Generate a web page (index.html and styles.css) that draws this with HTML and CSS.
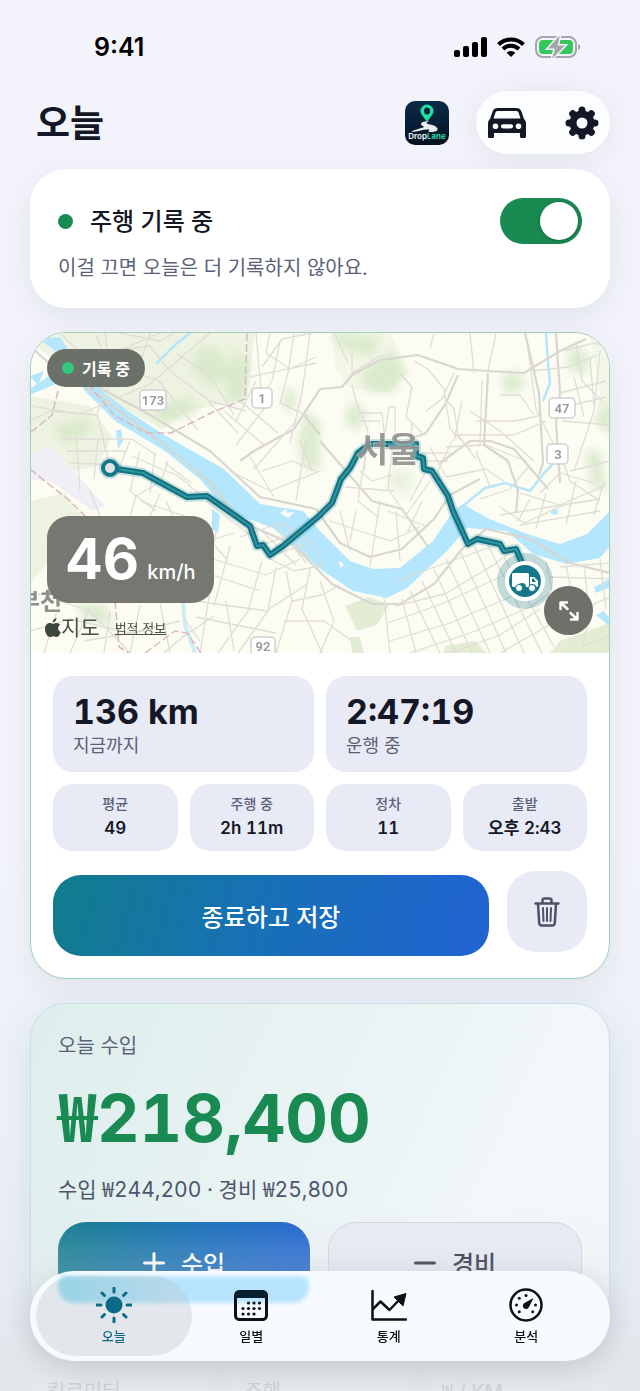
FILE: index.html
```html
<!DOCTYPE html>
<html lang="ko">
  <head>
    <meta charset="UTF-8" />
    <meta name="viewport" content="width=device-width, initial-scale=1.0" />
    <title>DropLane</title>
    <link rel="stylesheet" href="styles.css">
  </head>
  <body>
    <div class="screen">
      <!-- Status bar -->
      <div class="status-bar">
        <span class="clock">9:41</span>
        <div class="status-icons">
          <svg width="33" height="20" viewBox="0 0 33 20">
            <rect x="0" y="13" width="6" height="7" rx="2" />
            <rect x="9" y="9" width="6" height="11" rx="2" />
            <rect x="18" y="5" width="6" height="15" rx="2" />
            <rect x="27" y="0" width="6" height="20" rx="2" />
          </svg>
          <svg width="28" height="20" viewBox="0 0 28 20">
            <path d="M1.500 7.500a18 18 0 0 1 25 0M6 12a11.500 11.500 0 0 1 16 0" fill="none" stroke="#000" stroke-width="4" />
            <path d="M14 20l-4.300-4.300a6.200 6.200 0 0 1 8.600 0z" />
          </svg>
          <svg width="46" height="22" viewBox="0 0 46 22">
            <rect x="1" y="1" width="40" height="20" rx="7" fill="none" stroke="#a5a6ac" stroke-width="2" />
            <rect x="4" y="4" width="34" height="14" rx="4" fill="#34c759" />
            <path d="M43 8c3 1 3 5 0 6z" fill="#a5a6ac" />
            <path class="bolt" d="M25-1L13 12.500h7L17 23 30 9.500h-7.500z" />
          </svg>
        </div>
      </div>

      <!-- Header -->
      <header class="header">
        <h1>오늘</h1>
        <svg class="app-icon" viewBox="0 0 44 44">
          <defs>
            <linearGradient id="iconBg" x1="0" y1="0" x2="0" y2="1">
              <stop offset="0" stop-color="#0b2c49" />
              <stop offset="1" stop-color="#04101f" />
            </linearGradient>
          </defs>
          <rect width="44" height="44" rx="10" fill="url(#iconBg)" />
          <path d="M22 21c-3-5-6.500-7.500-6.500-11a6.500 6.500 0 0 1 13 0c0 3.500-3.500 6-6.500 11z" fill="#1fe0a0" />
          <ellipse cx="22" cy="10" rx="3" ry="3.500" fill="#06233a" />
          <path d="M6 30.500c4-2 9-3 12-4 3-1-3-2-2-4 1-1.500 5-2.500 8-2-4 1-3 2 1 3 6 1 9 4 7 6-2 1.500-6 2-9 1 2-1 2-2-1-2-5 0-9 3-16 2z" fill="#e9edf2" />
          <text class="icon-word" x="22" y="38" text-anchor="middle">Drop<tspan fill="#2be3b4">Lane</tspan></text>
        </svg>
        <div class="header-actions">
          <button type="button" aria-label="차량">
            <svg width="38" height="32" viewBox="0 0 38 32">
              <path fill-rule="evenodd" d="M10 1h18c3 0 4.500 1 5.400 3.500L36 12c1.500 1.400 2 3 2 5v12.500c0 1-.7 1.500-1.500 1.500h-3c-1 0-1.500-.6-1.500-1.500V26H6v3.500c0 1-.6 1.500-1.500 1.500h-3C.6 31 0 30.500 0 29.500V17c0-2 .5-3.600 2-5l2.600-7.500C5.500 2 7 1 10 1zM10 4c-1.500 0-2.200.5-2.700 2L5.500 11.500h27L30.700 6c-.5-1.500-1.200-2-2.700-2zM7.500 16.500a2.800 2.800 0 1 0 0 5.600 2.800 2.800 0 0 0 0-5.600zm23 0a2.800 2.800 0 1 0 0 5.600 2.800 2.800 0 0 0 0-5.600zM15 17.200a2 2 0 0 0 0 4.200h8a2 2 0 0 0 0-4.200z" />
            </svg>
          </button>
          <button type="button" aria-label="설정">
            <svg width="34" height="34" viewBox="-17 -17 34 34">
              <circle r="9" fill="none" stroke="#141826" stroke-width="7" />
              <g stroke="#141826" stroke-width="7" stroke-linecap="round">
                <path d="M0-11v-2M0 11v2M-11 0h-2M11 0h2M-8-8l-1.300-1.300M8-8l1.300-1.300M-8 8l-1.300 1.300M8 8l1.300 1.300" />
              </g>
            </svg>
          </button>
        </div>
      </header>

      <main class="content">
        <!-- Recording switch -->
        <section class="card record-card">
          <div class="record-row">
            <span class="dot"></span>
            <label for="record">주행 기록 중</label>
            <input type="checkbox" role="switch" id="record" checked />
          </div>
          <p>이걸 끄면 오늘은 더 기록하지 않아요.</p>
        </section>

        <!-- Current trip -->
        <section class="card trip-card">
          <div class="map">
            <svg class="map-art" viewBox="30 332 580 320" preserveAspectRatio="xMidYMid slice">
              <defs>
                <filter id="soft"><feGaussianBlur stdDeviation="4" /></filter>
              </defs>
              <rect x="30" y="332" width="580" height="320" fill="#fcfcf3" />

              <!-- Parks and hills -->
              <g fill="#edf3e0">
                <path d="M30 332h225l-8 66-60 12-25 18-70-38-62-50z" />
                <path d="M30 395l60 10 22 30-14 30-35 8-33-14z" />
                <path d="M30 500l35-8 22 30-57 60z" />
                <path d="M330 332h60l18 40-20 20-38-4-14-20z" opacity=".6" />
                <path d="M590 332h20v100l-16-10 6-30z" opacity=".6" />
              </g>
              <g fill="#d3e6c4" filter="url(#soft)" opacity=".75">
                <path d="M200 345l20 5 12 25-22 10-18-16z" />
                <path d="M150 405l40-8 8 14-35 12z" />
                <path d="M232 350l18 12-6 34-14 10-4-24z" />
                <path d="M286 385l10 6-2 20-12-4z" />
                <path d="M305 410l15 10v50l-18-5-4-26z" />
                <path d="M332 332l50 4-10 20-30-8z" />
                <path d="M360 372l32-24 14 22-14 22-26-2z" />
                <path d="M350 400l18 10-10 20-14-8z" />
                <path d="M500 375l20-5 6 16-20 8z" />
                <path d="M570 345l20 8-4 22-20-8z" />
                <path d="M596 420l14-25v40z" />
                <path d="M585 450l16 0 5 40-14-2z" />
                <path d="M395 465l20 8-8 22-18-10z" opacity=".6" />
                <path d="M75 600l30 4 10 22-30-8z" />
                <path d="M55 425l30-8 8 12-30 14z" />
              </g>
              <g fill="#e2edd3">
                <path d="M345 605l24-9 20 8-12 20-20 6z" />
                <path d="M350 636l10 0 4 16h-12z" />
                <path d="M445 645l30-5 12 12h-44z" />
                <path d="M560 640l50-18v30h-60z" />
              </g>
              <path d="M30 455c15-15 25-10 35 5l40 45-12 5-40-28-23-4z" fill="#efeff5" />

              <!-- River -->
              <g fill="#b4e6fd">
                <path d="M36 338l24-2 14 22 26 30 28 22 36 24 60 34 36 35 43 7 17 20 13 13 17 17 23 8 27-1 33-27 20-30 10-7 24 14 40 16 33 10 27-10 23-23v35l-10 12-33 6-34-10-26-23-40-3-20 23-40 37-20 10-34-7-33-22-47-41-46-17-27-32-35-28-50-30-30-30-22-34-26-20z" />
                <path d="M30 388l20-14 8 8-28 12zM30 375l14-5-6 14z" />
                <path d="M594 586l16-8v8l-14 6zM596 614l8-4 6 8v8zM552 508l6 1-1 5-6-1z" />
                <path d="M116 430l5-2 2 12-5 8zM212 508l8 6-2 18-6-4z" />
              </g>
              <g fill="none" stroke="#b4e6fd" stroke-width="2.500">
                <path d="M546 332l2 30 2 20-7 18M463 505l22-18 20-5 25 8 14-18 8-8M156 363l20-20 14-11" />
                <path d="M183 602l2 22 10 28" stroke-width="4" stroke="#cdebf2" />
              </g>
              <path d="M280 512l6-4 1 4 7-1-6 6zM338 560l6 3-3 4zM38 350l8 2 3 7-8-4z" fill="#fff" />

              <!-- Highways -->
              <g class="road road-wide">
                <path d="M30 345l22 20 50 32 53 40 53 42 34 42 50 22 40 40 40 20h28l34-20 28-35 24-20 44 10 40 24 40 10 40-12" />
                <path d="M70 358l32 30 48 26 60 36 50 46 56 12 24 34 30 14 32-8 32-30 16-24 30-16" />
                <path d="M320 388l22-2 10-12 28-15 38-5 40 14 30 2 36 2 36-22 26-12" />
                <path d="M240 460l14-10 40-22 26-40" />
                <path d="M458 374l-12 28-20 30-40 16M488 372l-4 72 24 16 10 30-2 22" />
                <path d="M525 332l14 60 4 70-4 12M556 332l4 60-4 30 4 60" />
                <path d="M440 462l30-22h20l24 8 34 40" />
                <path d="M320 434l-16-20M320 440l52 60 30 8 26 38" />
              </g>

              <!-- Local streets, north-west -->
              <g class="road">
                <path d="M105 332l6 50-14 30 12 50M60 332l30 30 70-30M96 334l12 30 50 15 40 50M30 405l50 8 70-30 60-51" />
                <path d="M150 332l-10 30-34 18M110 350l40-5 20 25 40 30 36 10M30 420l20-10 46 4M62 438h70l24 16" />
                <path d="M66 450h60M70 462l50 2M76 430l4 60M98 438l-4 40M130 440l-12 30" />
                <path d="M120 332l40 8 14-8M176 352l34 22 24 40M132 455l46 20 24 20M140 450l-10 40 26 20" />
                <path d="M155 452l-5 40M168 460l-8 24M165 462l26 20M208 400l30 32" />
                <path d="M224 410l40 34M240 400l38 32M256 380l-20 40M270 400l-34 44M296 420l-42 48" />
                <path d="M256 332l6 68M270 332l-4 20 24 16 26-12M280 340l-8 40-14 20M294 332l-6 40-8 30 30 14M250 376l66-14M262 366l20-28 30-6" />
                <path d="M310 332l-8 60-12 50M300 440l12 30M262 470l30-10 24 10M230 470l40 20 50-20M250 456l24 40M306 440l-10 60" />
              </g>

              <!-- Local streets, centre and north-east -->
              <g class="road">
                <path d="M352 352v20l30-18M334 332l14 30M352 384l4 16 12 30-4 40M358 412h24l4 36M360 420h20M385 432l4-26h6v30" />
                <path d="M414 360l14 8 16 20 6 40 20 20M430 348l4-16M470 332l4 40M496 332l-8 38M400 372l12 14-6 30 16 16" />
                <path d="M412 420l-1 26M426 410l16-12 12-26M444 396l10 12 4 26 18 24M482 380l-2 64M500 394h20l14 20" />
                <path d="M476 420h40l26-6M470 410l30 20 34 30M454 434h60l32-14M446 446l40-2 40 16M462 400l-8 40" />
                <path d="M528 348l8 60 20 40M532 370l36-4 30-12M560 392l46-12M574 376l10 40M590 358l4 46M600 350l-6 60-20 60" />
                <path d="M562 420l48 4M556 408l50-12M564 350l30-8 16 4M576 340l6 40 20 20M570 470l40-10M560 450l10 30 30 20" />
                <path d="M420 452h30M426 460h22M430 446l16 30M452 440l-14 30 8 24M446 476l40-8 20 14M476 450l14 36M530 464l-20 24-30 10" />
                <path d="M392 448l-4 40 14 20M360 470l12 10 20-6M366 450l-8 50 20 16M345 486l50 4M410 500l16-30M430 480l-24 34" />
                <path d="M540 492l20-20 34 10M520 492l40 12 46-20M500 506l24 16 40-18M530 498l-12 22M546 492l-10 36M576 480l-10 44M604 480l-10 34M500 514l100-16M520 524l80-14" />
              </g>

              <!-- Local streets, south -->
              <g class="road">
                <path d="M206 500l44 34 20 24M194 520l34 40M184 548l50-16M216 530l-10 60M230 545l-16 60M200 570l60 20M206 556l60 18 34-16" />
                <path d="M262 560l-14 50-30 42M276 566l-8 44-30 42M196 600l70 10 40-26M196 616l80 16M210 590l-10 62M226 600l8 50" />
                <path d="M240 536l40-14 30 16 14 26-30 6-24-12M262 530l34 34M276 524l30 38M290 526l20 34M256 546l46-16M266 556l44-14" />
                <path d="M286 570l6 30-16 52M310 568l-8 40 20 44M292 600l30-6 18-10M284 620h40l28 20M320 580l14 40-14 32" />
                <path d="M30 590l60 20 40 42M30 630l40-12 60 14 50-12M60 600l-16 52M90 606l-20 46M110 610l-6 42M140 604l-10 48M160 602l10 50M84 640l60-10" />
                <path d="M100 515l-10-25M130 515l6-20 24-14M150 515l10-22M180 530l-14-30M140 500l60 20M214 615l-30 20-20 17M200 640l-14-20" />
                <path d="M384 596l6 56M395 605l50-12 50-30 20-16M388 622l56-20 56-26M390 640l60-18 60-26 30-20M410 652l60-20 60-26 20-14M450 652l50-18 40-26M500 652l60-34 50-22" />
                <path d="M410 590l30 62M422 580l34 72M434 568l38 84M446 558l44 94M460 550l46 102M474 544l50 108M488 544l54 108M402 598l14 54M504 556l50 90M396 580l100-36" />
                <path d="M340 510l10 40M356 510l-6 30M380 500l-10 66M396 510l4 50M330 520l60 20 30-14M388 510l40 16M422 500l-14 30" />
                <path d="M560 566l50-4M550 576l60 2M546 560l6 30M566 564l6 30M584 562l4 40M600 558l6 50M592 606l-10 40 28-12" />
              </g>

              <!-- City limits -->
              <g fill="none" stroke="#d9b9bf" stroke-width="1.500" stroke-dasharray="8 3">
                <path d="M247 332l-2 66-34 14-40 20-25 0-32-18-20-24-14-18" />
                <path d="M58 390l-6 24-22 18M30 468l40 32 20 20M115 600l4 46 10 6M145 652l30-22 12 2 14 20" />
              </g>

              <!-- Road shields -->
              <g class="shield">
                <rect x="140" y="389" width="26" height="20" rx="4" /><text x="153" y="404">173</text>
                <rect x="252" y="387" width="20" height="20" rx="4" /><text x="262" y="402">1</text>
                <rect x="549" y="397" width="26" height="20" rx="4" /><text x="562" y="412">47</text>
                <rect x="547" y="443" width="21" height="20" rx="4" /><text x="558" y="458">3</text>
                <rect x="251" y="636" width="24" height="20" rx="4" /><text x="263" y="650">92</text>
              </g>

              <!-- Driven route -->
              <defs>
                <path id="route" d="M110 467l33 5 44 24 20-1 43 30 7 20 6-1 7 10 13-9 36-30 13-13 9-24 9-11 8-15 12-9h46v12l7 2 1 11 8 2 16 25 5 15 15 33 9-5 23 5 4 7 12-2 6 14" />
              </defs>
              <g fill="none" stroke-linejoin="round">
                <use href="#route" stroke="#2a8fa0" stroke-opacity=".25" stroke-width="10" />
                <use href="#route" stroke="#14707f" stroke-width="6" />
                <use href="#route" stroke="#2f94a3" stroke-width="2" />
              </g>
              <circle cx="110" cy="467" r="11" fill="#14707f" opacity=".2" />
              <circle cx="110" cy="467" r="7" fill="#e2e2e6" stroke="#14788a" stroke-width="4" />

              <text class="city" x="388" y="461">서울</text>
              <text class="town" x="40" y="609">부천</text>

              <!-- Truck -->
              <g transform="translate(525 580)">
                <circle r="28" fill="#14788a" opacity=".25" />
                <circle r="18" fill="#14788a" stroke="#fff" stroke-width="4" />
                <path d="M-13-6c0-1.500.5-2 2-2H2c1.500 0 2 .5 2 2V6h-3a4 4 0 0 0-8 0h-4c-1.500 0-2-.5-2-2zM5-4h4l4 4v4c0 1.500-.5 2-1.500 2a4 4 0 0 0-6.500-2zM7-2.500V1h4L8.500-2.500z" fill="#fff" fill-rule="evenodd" />
                <g fill="#fff" stroke="#14788a">
                  <circle cx="-6" cy="7" r="3.500" /><circle cx="7" cy="7" r="3.500" />
                </g>
              </g>
            </svg>

            <div class="map-badge"><span></span>기록 중</div>
            <div class="speed"><strong>46</strong> km/h</div>
            <div class="map-credit">
              <svg width="16" height="20" viewBox="0 0 16 20">
                <path d="M11.500 0c.2 2-1.500 4.200-3.700 4.200C7.500 2.200 9.500.2 11.500 0zM8 5.800c.8 0 2-.9 3.700-.9 1.500 0 2.800.8 3.500 1.900-3 1.800-2.500 6 .6 7.300-.7 2.200-2.200 4.900-4 4.900-1.300 0-1.800-.8-3.500-.8s-2.200.8-3.500.8C2.500 19 0 15 0 11c0-4 2.400-6 4.700-6C6.200 5 7.300 5.800 8 5.800z" />
              </svg>
              <span>지도</span>
              <a href="#legal">법적 정보</a>
            </div>
            <button type="button" class="expand" aria-label="지도 확대">
              <svg width="20" height="20" viewBox="0 0 20 20" fill="none" stroke="#fff" stroke-width="2.500" stroke-linecap="round" stroke-linejoin="round">
                <path d="M1.500 8V1.500H8M2 2l6.500 6M18.500 12v6.500H12M18 18l-6.500-6" />
              </svg>
            </button>
          </div>

          <div class="trip-body">
            <dl class="stats-large">
              <div><dd>136 km</dd><dt>지금까지</dt></div>
              <div><dd>2:47:19</dd><dt>운행 중</dt></div>
            </dl>
            <dl class="stats-small">
              <div><dt>평균</dt><dd>49</dd></div>
              <div><dt>주행 중</dt><dd>2h 11m</dd></div>
              <div><dt>정차</dt><dd>11</dd></div>
              <div><dt>출발</dt><dd>오후 2:43</dd></div>
            </dl>
            <div class="trip-actions">
              <button type="button" class="btn btn-primary">종료하고 저장</button>
              <button type="button" class="btn btn-trash" aria-label="삭제">
                <svg width="26" height="30" viewBox="0 0 26 30" fill="none" stroke="#4b5268" stroke-width="2.500" stroke-linecap="round" stroke-linejoin="round">
                  <path d="M1.500 6.500h23M8.500 6V3.500c0-1.300.7-2 2-2h5c1.300 0 2 .7 2 2V6M4 7l1.200 19c.1 1.600 1 2.500 2.500 2.500h10.600c1.500 0 2.400-.9 2.500-2.500L22 7" />
                  <path d="M9 11l.5 13M13 11v13M17 11l-.5 13" stroke-width="2" />
                </svg>
              </button>
            </div>
          </div>
        </section>

        <!-- Income -->
        <section class="card income-card">
          <h2>오늘 수입</h2>
          <p class="amount"><span class="won">₩</span>218,400</p>
          <p class="breakdown">수입 <span class="won">₩</span>244,200 · 경비 <span class="won">₩</span>25,800</p>
          <div class="income-actions">
            <button type="button" class="btn btn-primary">
              <svg width="22" height="22" viewBox="0 0 22 22"><path d="M1.500 11h19M11 1.500v19" stroke="#fff" stroke-width="3" stroke-linecap="round" /></svg>
              수입
            </button>
            <button type="button" class="btn btn-secondary">
              <svg width="22" height="22" viewBox="0 0 22 22"><path d="M1.500 11h19" stroke="#2b2f3f" stroke-width="3" stroke-linecap="round" /></svg>
              경비
            </button>
          </div>
        </section>

        <section class="metrics">
          <div class="metric">킬로미터</div>
          <div class="metric">주행</div>
          <div class="metric"><span class="won">₩</span> / KM</div>
        </section>
      </main>
    </div>

    <div class="bottom-fade"></div>

    <!-- Tab bar -->
    <nav class="tab-bar">
      <a href="#today" class="active">
        <svg width="36" height="36" viewBox="-18 -18 36 36">
          <circle r="8.500" fill="#0b6a86" />
          <path d="M0-13v-4M0 13v4M-13 0h-4M13 0h4M-9.500-9.500l-2.500-2.500M9.500-9.500l2.500-2.500M-9.500 9.500l-2.500 2.500M9.500 9.500l2.500 2.500" stroke="#0b6a86" stroke-width="3" stroke-linecap="round" />
        </svg>
        오늘
      </a>
      <a href="#daily">
        <svg width="36" height="36" viewBox="0 0 36 36">
          <rect x="2.500" y="4.500" width="31" height="28" rx="4" fill="none" stroke="#0c1117" stroke-width="3" />
          <path d="M2 11V7c0-2 1.500-3.500 3.500-3.500h25C32.500 3.500 34 5 34 7v4z" fill="#06202f" />
          <g fill="#0c1117">
            <circle cx="15.500" cy="16" r="1.600" /><circle cx="21" cy="16" r="1.600" /><circle cx="26.500" cy="16" r="1.600" />
            <circle cx="10" cy="21.500" r="1.600" /><circle cx="15.500" cy="21.500" r="1.600" /><circle cx="21" cy="21.500" r="1.600" /><circle cx="26.500" cy="21.500" r="1.600" />
            <circle cx="10" cy="27" r="1.600" /><circle cx="15.500" cy="27" r="1.600" /><circle cx="21" cy="27" r="1.600" />
          </g>
        </svg>
        일별
      </a>
      <a href="#stats">
        <svg width="36" height="36" viewBox="0 0 36 36">
          <path d="M1.500 4v28.500H35M2 22l7.500-7.500 9 8.500L29 12" fill="none" stroke="#0c1117" stroke-width="2.500" stroke-linecap="round" stroke-linejoin="round" />
          <path d="M23 10l12-3.500L32 19z" fill="#0c1117" stroke="#0c1117" stroke-linejoin="round" />
        </svg>
        통계
      </a>
      <a href="#analysis">
        <svg width="36" height="36" viewBox="-18 -18 36 36">
          <circle r="15.500" fill="none" stroke="#0c1117" stroke-width="2.500" />
          <path d="M7.500-7L3 2a3.200 3.200 0 1 1-4.500-4z" fill="#0c1117" />
          <g fill="#0c1117">
            <circle cx="0" cy="-9.500" r="1.500" /><circle cx="-6.700" cy="-6.700" r="1.500" /><circle cx="-9.500" cy="0" r="1.500" />
            <circle cx="9.500" cy="0" r="1.500" /><circle cx="-6.700" cy="6.700" r="1.500" /><circle cx="6.700" cy="6.700" r="1.500" />
          </g>
        </svg>
        분석
      </a>
    </nav>
  </body>
</html>
```

FILE: styles.css
```css
* {
  box-sizing: border-box;
}

body {
  margin: 0;
  background: #f2f3fb;
  color: #141826;
  font-family: Inter, "Noto Sans CJK KR", sans-serif;
}

h1,
h2,
p,
dl,
dd {
  margin: 0;
}

svg {
  display: block;
}

button {
  border: none;
  padding: 0;
  font-family: inherit;
  cursor: pointer;
}

a {
  color: inherit;
}

.screen {
  height: 100vh;
  padding: 0 30px;
  overflow-y: auto;
  scrollbar-width: none;
  background: linear-gradient(#f2f3fb 60%, #e9eef6);
}

/* Status bar */
.status-bar {
  display: flex;
  align-items: center;
  justify-content: space-between;
  height: 91px;
  padding: 2px 29px 0 64px;
}

.clock {
  color: #000;
  font-size: 25px;
  font-weight: 600;
}

.status-icons {
  display: flex;
  align-items: center;
  gap: 10px;
}

.bolt {
  fill: #a5a6ac;
  stroke: #f2f3fb;
  stroke-width: 3px;
  paint-order: stroke;
}

/* Header */
.header {
  display: flex;
  align-items: center;
  height: 63px;
  padding-left: 6px;
}

.header h1 {
  flex: 1;
  padding-bottom: 4px;
  font-size: 37px;
  font-weight: 700;
}

.app-icon {
  width: 44px;
  height: 44px;
}

.icon-word {
  fill: #fff;
  font-size: 8px;
  font-weight: 600;
}

.header-actions {
  display: flex;
  align-items: center;
  justify-content: space-between;
  width: 134px;
  height: 63px;
  margin-left: 27px;
  padding: 0 11px 0 12px;
  border-radius: 32px;
  background: #fcfdff;
  box-shadow: 0 4px 30px rgba(20, 30, 30, 0.07);
}

.header-actions button {
  background: none;
}

.header-actions svg {
  fill: #141826;
}

.content {
  display: flex;
  flex-direction: column;
  gap: 24px;
  padding: 15px 0 140px;
}

.card {
  border-radius: 36px;
  background: #fff;
  box-shadow: 0 8px 30px rgba(20, 40, 30, 0.07);
}

/* Recording switch */
.record-card {
  padding: 29px 28px 26px;
}

.record-row {
  display: flex;
  align-items: center;
  height: 46px;
}

.dot {
  width: 15px;
  height: 15px;
  margin-right: 17px;
  border-radius: 50%;
  background: #1a8a53;
}

.record-row label {
  flex: 1;
  padding-bottom: 4px;
  font-size: 24px;
  font-weight: 500;
}

.record-row input {
  appearance: none;
  position: relative;
  width: 82px;
  height: 46px;
  margin: 0;
  border-radius: 23px;
  background: #c9ccd6;
}

.record-row input::before {
  content: "";
  position: absolute;
  top: 4px;
  left: 4px;
  width: 38px;
  height: 38px;
  border-radius: 50%;
  background: #fff;
  box-shadow: 0 1px 4px rgba(0, 0, 0, 0.25);
}

.record-row input:checked {
  background: #1a8a53;
}

.record-row input:checked::before {
  left: 40px;
}

.record-card p {
  margin-top: 10px;
  color: #5a6178;
  font-size: 20px;
  line-height: 28px;
}

/* Trip card */
.trip-card {
  border: 1px solid #9fd0b9;
  overflow: hidden;
}

.map {
  position: relative;
  height: 320px;
}

.map-art {
  width: 100%;
  height: 100%;
}

.road {
  fill: none;
  stroke: #dfddd6;
  stroke-width: 1.3;
  stroke-linejoin: round;
}

.road-wide {
  stroke: #d8d6cf;
  stroke-width: 2.2;
}

.shield rect {
  fill: #fff;
  stroke: #cfcfcf;
  stroke-width: 1.5;
}

.shield text {
  fill: #98989a;
  font-family: Roboto, sans-serif;
  font-size: 13px;
  font-weight: 600;
  text-anchor: middle;
}

.city,
.town {
  fill: #8f8f8d;
  stroke: #fcfcf3;
  stroke-width: 2px;
  paint-order: stroke;
  font-weight: 700;
  text-anchor: middle;
}

.city {
  fill-opacity: 0.9;
  stroke-opacity: 0.4;
  font-size: 34px;
}

.town {
  font-size: 24px;
}

.map-badge,
.speed {
  position: absolute;
  left: 16px;
  color: #fff;
}

.map-badge {
  top: 16px;
  display: flex;
  align-items: center;
  gap: 8px;
  height: 38px;
  padding: 0 15px;
  border-radius: 19px;
  background: #6b7169;
  font-size: 16px;
  font-weight: 700;
}

.map-badge span {
  width: 12px;
  height: 12px;
  border-radius: 50%;
  background: #31c77c;
}

.speed {
  bottom: 50px;
  display: flex;
  align-items: baseline;
  gap: 8px;
  height: 87px;
  padding: 0 18px;
  border-radius: 22px;
  background: #757770;
  font-size: 20px;
  font-weight: 500;
  line-height: 87px;
}

.speed strong {
  font-size: 56px;
  font-weight: 700;
}

.map-credit {
  position: absolute;
  bottom: 9px;
  left: 14px;
  display: flex;
  align-items: center;
  color: #4a5148;
  font-size: 21px;
  line-height: 32px;
}

.map-credit svg {
  fill: #3f463d;
}

.map-credit a {
  margin-left: 15px;
  font-size: 13px;
}

.expand {
  position: absolute;
  right: 16px;
  bottom: 18px;
  display: grid;
  place-items: center;
  width: 49px;
  height: 49px;
  border-radius: 50%;
  background: #6f7069;
}

.trip-body {
  padding: 23px 22px 22px;
}

.stats-large,
.stats-small {
  display: grid;
  grid-template-columns: repeat(2, 1fr);
  gap: 12px;
  font-variant-numeric: tabular-nums;
}

.stats-large div,
.stats-small div {
  display: flex;
  flex-direction: column;
  justify-content: center;
  border-radius: 20px;
  background: #e8ebf5;
}

.stats-large div {
  height: 96px;
  padding: 4px 20px 0;
}

.stats-large dd {
  font-size: 34px;
  font-weight: 700;
  line-height: 40px;
}

.stats-large dt {
  color: #5a6178;
  font-size: 18px;
  line-height: 28px;
}

.stats-small {
  grid-template-columns: repeat(4, 1fr);
  margin-top: 12px;
}

.stats-small div {
  height: 67px;
  text-align: center;
}

.stats-small dt {
  color: #5a6178;
  font-size: 14px;
  font-weight: 500;
  line-height: 20px;
}

.stats-small dd {
  font-size: 17px;
  font-weight: 600;
  line-height: 28px;
}

.btn {
  display: flex;
  align-items: center;
  justify-content: center;
  gap: 16px;
  height: 81px;
  border-radius: 28px;
  font-size: 24px;
  font-weight: 500;
}

.btn-primary {
  flex: 1;
  background: linear-gradient(105deg, #117c8c, #1771b4 45%, #2163d3);
  color: #fff;
}

.btn-secondary {
  flex: 1;
  border: 1px solid #d3d6df;
  background: #e8ebf5;
  color: #2b2f3f;
}

.trip-actions {
  display: flex;
  align-items: flex-end;
  gap: 18px;
  height: 85px;
  margin-top: 20px;
}

.btn-trash {
  align-self: flex-start;
  width: 80px;
  background: #e8ebf5;
}

/* Income card */
.income-card {
  padding: 28px 27px;
  border: 1px solid #c5e0dd;
  background: linear-gradient(115deg, #ddeeec, #e8f2f3 40%, #f1f7fa 75%, #f2f9f8);
  box-shadow: 0 8px 40px rgba(30, 90, 140, 0.12);
}

.income-card h2 {
  color: #5a6178;
  font-size: 20px;
  font-weight: 400;
  line-height: 28px;
}

.won {
  font-family: "Noto Sans CJK KR", sans-serif;
  line-height: 1;
}

.amount {
  margin: 18px 0;
  color: #1a8a53;
  font-size: 66px;
  font-weight: 700;
  font-variant-numeric: tabular-nums;
  line-height: 80px;
}

.breakdown {
  color: #4f566c;
  font-size: 21px;
  font-variant-numeric: tabular-nums;
  line-height: 28px;
}

.income-actions {
  display: flex;
  gap: 18px;
  margin-top: 18px;
}

.metrics {
  display: grid;
  grid-template-columns: repeat(3, 1fr);
  gap: 12px;
}

.metric {
  height: 120px;
  padding: 22px 17px;
  border-radius: 28px;
  background: #f6f8fb;
  color: #5a6178;
  font-size: 20px;
  line-height: 28px;
}

.bottom-fade {
  position: fixed;
  right: 0;
  bottom: 0;
  left: 0;
  height: 180px;
  background: linear-gradient(rgba(226, 229, 234, 0), rgba(226, 229, 234, 0.3) 40%, rgba(226, 229, 234, 0.85) 80%);
  pointer-events: none;
}

/* Tab bar */
.tab-bar {
  position: fixed;
  right: 30px;
  bottom: 30px;
  left: 30px;
  display: grid;
  grid-template-columns: repeat(4, 1fr);
  height: 90px;
  padding: 0 15px;
  border-radius: 45px;
  background: #f7fbff;
  box-shadow: 0 8px 30px rgba(0, 0, 0, 0.14);
}

/* the income button showing through the glass */
.tab-bar::before {
  content: "";
  position: absolute;
  z-index: -1;
  top: 5px;
  left: 28px;
  width: 251px;
  height: 27px;
  border-radius: 8px 8px 16px 16px;
  background: linear-gradient(90deg, #86dcf4, #b6e4ff 45%);
  filter: blur(2px);
}

.tab-bar a {
  position: relative;
  display: flex;
  flex-direction: column;
  align-items: center;
  padding-top: 16px;
  color: #0c1117;
  font-size: 13px;
  font-weight: 500;
  line-height: 26px;
  text-decoration: none;
}

.tab-bar .active {
  color: #0b6a86;
}

.tab-bar .active::before {
  content: "";
  position: absolute;
  z-index: -1;
  inset: 5px -9px;
  border-radius: 40px;
  background: rgba(190, 194, 200, 0.35);
}
```
